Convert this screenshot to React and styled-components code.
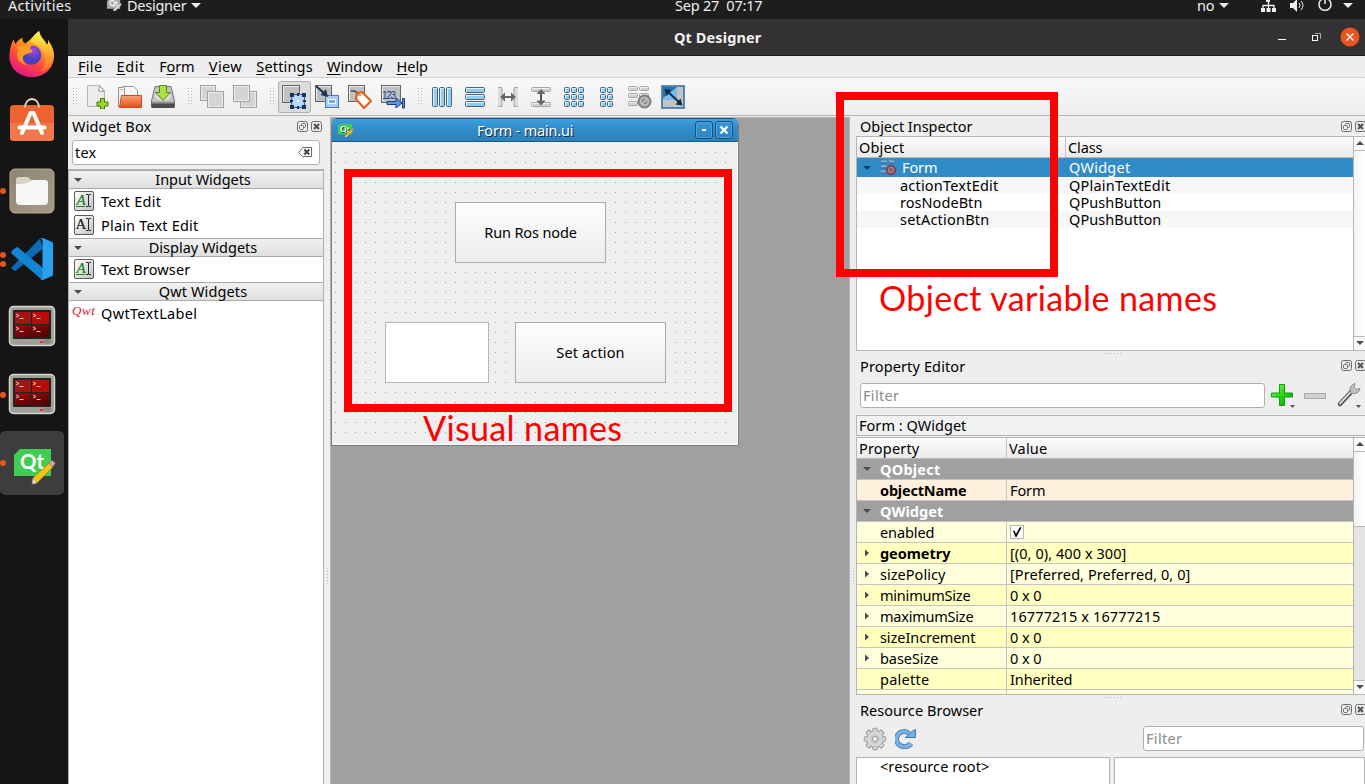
import React, { useLayoutEffect, useRef, useState } from "react";
import styled, { createGlobalStyle, css } from "styled-components";

const Global = createGlobalStyle`
  * { box-sizing: border-box; }
  body { margin: 0; overflow: hidden; }
  body { font-family: "Noto Sans", "Open Sans", sans-serif; font-size: 14.5px; line-height: 17px; color: #000; }
  svg { display: block; flex: none; }
`;

/* Text that is tracked to occupy a given width. */
const Line = styled.span`
  display: inline-block;
  flex: none;
  width: max-content;
  white-space: pre;
`;

function Fit({ w, children, className }) {
  const ref = useRef(null);
  const [spacing, setSpacing] = useState(0);
  useLayoutEffect(() => {
    const el = ref.current;
    el.style.letterSpacing = "0px";
    const natural = el.getBoundingClientRect().width;
    const next = (w + 0.4 - natural) / el.textContent.length;
    setSpacing(next);
    el.style.letterSpacing = next + "px";
  }, [w]);
  return (
    <Line ref={ref} className={className} style={{ letterSpacing: spacing }}>
      {children}
    </Line>
  );
}

/* ---------- shell ---------- */
const Screen = styled.div`
  position: relative;
  width: 1365px;
  height: 784px;
  overflow: hidden;
  display: flex;
  flex-direction: column;
  background: #eee;
`;
const TopBar = styled.header`
  display: grid;
  grid-template-columns: 8px 99px 568px 522px 1fr;
  height: 19px;
  flex: none;
  background: #1d1d1d;
  color: #f0f0f0;
  line-height: 10px;
`;
const TopCell = styled.div`
  display: flex;
  align-items: center;
  height: 10px;
  gap: ${(p) => p.$gap || 0}px;
`;
const TrayIcons = styled.div`
  display: flex;
  align-items: center;
  margin: 2px 0 0 26px;
  height: 12px;
`;
const Below = styled.div`
  display: flex;
  flex: 1;
  min-height: 0;
`;
const Dock = styled.nav`
  width: 68px;
  flex: none;
  background: #151515;
  padding-top: 2px;
`;
const DockItem = styled.div`
  position: relative;
  width: 64px;
  height: 68px;
  display: flex;
  align-items: center;
  justify-content: center;
  padding: ${(p) => p.$pad || "0"};
  border: solid transparent;
  border-width: 2px 0;
  border-radius: 6px;
  background: ${(p) => (p.$active ? "#3d3d3d" : "transparent")} padding-box;
`;
const Running = styled.div`
  position: absolute;
  left: 0;
  top: 0;
  height: 100%;
  display: flex;
  flex-direction: column;
  justify-content: center;
  gap: 3px;
  i {
    width: 6px;
    height: 6px;
    border-radius: 50%;
    background: #e95420;
  }
`;
const AppWindow = styled.main`
  flex: 1;
  min-width: 0;
  display: flex;
  flex-direction: column;
`;
const TitleBar = styled.div`
  display: grid;
  grid-template-columns: 606px 1fr 96px;
  align-items: center;
  height: 37px;
  flex: none;
  background: #333132;
  border-bottom: 1px solid #1c1c1c;
  color: #f4f4f4;
  font-weight: 700;
`;
const MenuBar = styled.div`
  display: flex;
  align-items: center;
  gap: 14.2px;
  height: 22px;
  flex: none;
  padding-left: 10px;
  border-bottom: 1px solid #cfcfcf;
  background: #eee;
  u { text-underline-offset: 2px; text-decoration-thickness: 1px; }
`;
const ToolBar = styled.div`
  display: flex;
  height: 38px;
  flex: none;
  padding-top: 3px;
  background: linear-gradient(#f9f9f9, #ededed);
  border-bottom: 1px solid #b5b5b5;
`;
const Handle = styled.div`
  width: ${(p) => p.$w || 16}px;
  padding: 7px 0 0 ${(p) => (p.$w ? 5 : 8)}px;
  &::before {
    content: "";
    display: block;
    width: 4px;
    height: 17px;
    background: radial-gradient(circle at 0.5px 0.5px, #b8b8b8 0.7px, transparent 0.8px) 0 0 / 3px 3px;
  }
`;
const ToolButton = styled.div`
  width: 33px;
  height: 32px;
  display: flex;
  align-items: center;
  justify-content: center;
  padding-right: 1px;
  border-radius: 3px;
  ${(p) =>
    p.$on &&
    css`
      background: #dcdcdc;
      box-shadow: inset 0 0 0 1px #b0b0b0;
    `}
`;
const Workspace = styled.div`
  display: flex;
  flex: 1;
  min-height: 0;
`;

/* ---------- shared dock parts ---------- */
const PanelTitle = styled.div`
  display: flex;
  align-items: center;
  justify-content: space-between;
  height: ${(p) => p.$h}px;
  flex: none;
  padding-left: 4px;
  margin-right: ${(p) => p.$r}px;
`;
const PanelButtons = styled.div`
  display: flex;
  gap: 2px;
`;
const Field = styled.div`
  display: flex;
  align-items: center;
  justify-content: space-between;
  width: ${(p) => p.$w}px;
  height: 25px;
  flex: none;
  padding: 0 6px 0 2px;
  border: 1px solid #b0b0b0;
  border-radius: 3px;
  background: #fff;
  color: ${(p) => (p.$hint ? "#8c8c8c" : "#000")};
`;
const Grip = styled.div`
  height: ${(p) => p.$h}px;
  flex: none;
  display: flex;
  justify-content: center;
  padding: 2px 0 0 5px;
  &::before {
    content: "";
    width: 17px;
    height: 1px;
    background: repeating-linear-gradient(90deg, #b9b9b9 0 1px, transparent 1px 3px);
  }
`;
const VGrip = styled.div`
  width: ${(p) => p.$w}px;
  flex: none;
  display: flex;
  align-items: flex-start;
  padding: 452px 0 0 ${(p) => p.$l}px;
  &::before {
    content: "";
    width: 1px;
    height: 17px;
    background: repeating-linear-gradient(#b9b9b9 0 1px, transparent 1px 3px);
  }
`;

/* ---------- widget box ---------- */
const WidgetBox = styled.section`
  width: 256px;
  flex: none;
  display: flex;
  flex-direction: column;
  padding-top: 1px;
`;
const SearchRow = styled.div`
  padding: 4px;
`;
const WidgetTree = styled.div`
  flex: 1;
  background: #fff;
  border: 1px solid #b0b0b0;
  border-bottom: 0;
`;
const Category = styled.div`
  display: grid;
  grid-template-columns: 17px 1fr 3px;
  align-items: center;
  justify-items: center;
  height: 19px;
  line-height: 17px;
  border: solid #a9a9a9;
  border-width: 1px 0;
  background: linear-gradient(#f1f1f1, #dfdfdf);
`;
const WidgetList = styled.div`
  padding-bottom: 1px;
`;
const WidgetRow = styled.div`
  display: grid;
  grid-template-columns: 32px 1fr;
  align-items: center;
  height: 24px;
  svg { margin-left: 5px; }
`;
const QwtMark = styled.i`
  padding-left: 3px;
  font: italic 13px/12px "Liberation Serif", serif;
  color: #e8101c;
  letter-spacing: 0.6px;
  margin-top: -4px;
`;

/* ---------- canvas ---------- */
const Mdi = styled.section`
  position: relative;
  width: 520px;
  flex: none;
  margin-top: 1px;
  background: #a0a0a0;
  border: solid #b5b5b5;
  border-width: 1px 1px 0;
`;
const FormWindow = styled.div`
  width: 408px;
  height: 328px;
  display: flex;
  flex-direction: column;
  border: 1px solid #7d7d7d;
  border-top: 0;
  border-radius: 6px 6px 0 0;
  background: #efefef;
  overflow: hidden;
`;
const FormTitle = styled.div`
  display: grid;
  grid-template-columns: 145px 1fr 20px 18px;
  align-items: center;
  height: 24px;
  flex: none;
  padding: 0 5px 0 0;
  color: #fff;
  background: linear-gradient(#3da2e2, #318dca 45%, #2c80b8);
  box-shadow: inset 0 1px #1c5a85, inset 0 -1px #1c5a85;
  text-shadow: 1px 1px 0 #123;
`;
const CaptionIcon = styled.div`
  padding: 1px 0 0 6px;
`;
const CaptionButton = styled.div`
  width: 18px;
  height: 18px;
  display: flex;
  align-items: center;
  justify-content: center;
  border: 1px solid #17517a;
  border-radius: 3px;
  box-shadow: inset 0 0 0 1px #4aa3dc;
`;
const FormBody = styled.div`
  position: relative;
  flex: 1;
  box-shadow: inset -1px -1px #fafafa;
  &::before {
    content: "";
    position: absolute;
    left: 3px;
    top: 10px;
    width: 391px;
    height: 281px;
    background:
      linear-gradient(90deg, transparent 1px, #efefef 1px) 0 0 / 10px 10px,
      linear-gradient(#9a9a9a 1px, transparent 1px) 0 0 / 10px 10px;
  }
`;
const placed = css`
  position: absolute;
  left: ${(p) => p.$x}px;
  top: ${(p) => p.$y}px;
  width: ${(p) => p.$w}px;
  height: ${(p) => p.$h}px;
`;
const PushButton = styled.div`
  ${placed}
  display: flex;
  align-items: center;
  justify-content: center;
  border: 1px solid #ababab;
  border-radius: 2px;
  background: linear-gradient(#fdfdfd, #ededed);
`;
const PlainEdit = styled.div`
  ${placed}
  border: 1px solid #b5b5b5;
  background: #fff;
`;

/* ---------- right docks ---------- */
const RightDocks = styled.section`
  flex: 1;
  min-width: 0;
  display: flex;
  flex-direction: column;
  padding-top: 1px;
`;
const Frame = styled.div`
  display: flex;
  height: ${(p) => p.$h}px;
  flex: none;
  border: 1px solid #b5b5b5;
  border-right: 0;
  background: #fff;
`;
const Table = styled.div`
  width: 496px;
  flex: none;
  overflow: hidden;
`;
const HeaderRow = styled.div`
  display: grid;
  grid-template-columns: ${(p) => p.$first}px 1fr;
  align-items: center;
  height: 21px;
  line-height: 20px;
  padding-left: 2px;
  background: linear-gradient(#fcfcfc, #ebebeb);
  border-bottom: 1px solid #b9b9b9;
  > * + * { border-left: 1px solid #c4c4c4; padding-left: 2px; }
`;
const ObjectRow = styled.div`
  display: grid;
  grid-template-columns: 6px 17px 22px 167px 1fr;
  align-items: center;
  height: 19px;
  background: #308cc6;
  color: #fff;
`;
const ObjectCells = styled.div`
  display: grid;
  grid-template-columns: 43px 169px 1fr;
  align-items: center;
  height: 17px;
  background: ${(p) => (p.$alt ? "#f7f7f7" : "#fff")};
`;
const ScrollBar = styled.div`
  flex: 1;
  display: flex;
  flex-direction: column;
  border-left: 1px solid #b5b5b5;
  background: ${(p) => (p.$groove ? "#e4e4e4" : "linear-gradient(90deg, #f4f4f4, #fff)")};
`;
const ScrollEnd = styled.div`
  height: 14px;
  flex: none;
  padding: 4px 0 0 2px;
  background: #fbfbfb;
  border: solid #b9b9b9;
  border-width: ${(p) => (p.$bottom ? "1px 0 0" : "0 0 1px")};
`;
const Thumb = styled.div`
  flex: ${(p) => (p.$h ? `0 0 ${p.$h}px` : 1)};
  background: linear-gradient(90deg, #f4f4f4, #fff);
  border-bottom: ${(p) => (p.$h ? "1px solid #b9b9b9" : 0)};
`;
const Space = styled.div`
  flex: 1;
`;
const EditorBar = styled.div`
  display: flex;
  align-items: center;
  height: 39px;
  flex: none;
  padding-left: 4px;
  gap: 6px;
`;
const IconSlots = styled.div`
  display: flex;
  align-items: center;
  gap: ${(p) => p.$gap}px;
`;
const ObjectName = styled.div`
  height: 21px;
  flex: none;
  margin-bottom: 1px;
  padding-left: 2px;
  line-height: 19px;
  border: 1px solid #b5b5b5;
  border-right: 0;
  background: #f1f1f1;
`;
const tones = { group: "#a0a0a0", peach: "#fff0de", pale: "#ffffdc", deep: "#ffffbf" };
const PropertyRow = styled.div`
  display: grid;
  grid-template-columns: 23px 126px 1fr;
  align-items: center;
  height: 21px;
  line-height: 20px;
  border-bottom: 1px solid #c3c3c3;
  background: ${(p) => tones[p.$tone]};
  color: ${(p) => (p.$tone === "group" ? "#fff" : "#000")};
  font-weight: ${(p) => (p.$bold ? 700 : 400)};
  svg { margin-left: 6px; }
`;
const ValueCell = styled.div`
  display: flex;
  align-items: center;
  height: 20px;
  padding-left: 3px;
  border-left: 1px solid #c3c3c3;
  font-weight: 400;
`;
const Check = styled.div`
  width: 14px;
  height: 14px;
  border: 1px solid #b5b5b5;
  background: #fff;
  svg { margin: 0; }
`;
const ResourceBar = styled.div`
  display: flex;
  align-items: center;
  justify-content: space-between;
  height: 37px;
  flex: none;
  padding: 0 1px 0 7px;
`;
const ResourcePanes = styled.div`
  display: grid;
  grid-template-columns: 254px 1fr;
  gap: 4px;
  flex: 1;
`;
const Pane = styled.div`
  border: 1px solid #b5b5b5;
  border-bottom: 0;
  background: #fff;
  padding-left: 23px;
  line-height: 17px;
`;

/* ---------- annotations ---------- */
const Outline = styled.div`
  ${placed}
  border: 8px solid #f00;
`;
const Caption = styled.div`
  position: absolute;
  left: ${(p) => p.$x}px;
  top: ${(p) => p.$y}px;
  font: 34px/40px Lato, sans-serif;
  color: #f00;
`;

/* ---------- icons ---------- */
const Down = ({ c = "#4a4a4a", w = 8, h = 4 }) => (
  <svg width={w} height={h} viewBox="0 0 8 4" preserveAspectRatio="none"><path d="M0 0h8L4 4z" fill={c} /></svg>
);
const Up = () => <svg width="8" height="4" viewBox="0 0 8 4"><path d="M0 4h8L4 0z" fill="#4a4a4a" /></svg>;
const Right = () => <svg width="8" height="8" viewBox="0 0 8 8"><path d="M2 0.5v7L6 4z" fill="#4a4a4a" /></svg>;

const FloatClose = () => (
  <PanelButtons>
    <svg width="12" height="12" viewBox="0 0 12 12" fill="none" stroke="#6a6a6a">
      <rect x=".5" y=".5" width="10" height="10" rx="2" />
      <rect x="4.5" y="2.5" width="4" height="4" rx="1" />
      <rect x="2.5" y="4.5" width="4" height="4" rx="1" fill="#eee" />
    </svg>
    <svg width="12" height="12" viewBox="0 0 12 12" fill="none" stroke="#6a6a6a">
      <rect x=".5" y=".5" width="10" height="10" rx="2" />
      <path d="M3 3l5 5M8 3l-5 5" stroke="#555" strokeWidth="2.2" />
    </svg>
  </PanelButtons>
);
const ClearIcon = () => (
  <svg width="15" height="11" viewBox="0 0 15 11" fill="none" stroke="#666">
    <path d="M.7 5.5L4.500.5H13.500V9.500H4.500Z" />
    <path d="M6.300 2.500l5 5M11.300 2.500l-5 5" strokeWidth="2" stroke="#444" />
  </svg>
);
const TextGlyph = ({ green }) => (
  <svg width="20" height="20" viewBox="0 0 20 20">
    <defs><linearGradient id="tg" x2="1" y2="1"><stop stopColor="#fff" /><stop offset="1" stopColor="#c2c2c2" /></linearGradient></defs>
    <rect x=".5" y=".5" width="19" height="19" rx="1.500" fill="url(#tg)" stroke="#5a5a5a" />
    <text x={green ? 2.5 : 1.5} y="14" fontFamily="Liberation Serif, serif" fontSize="15" fontStyle={green ? "italic" : "normal"} fill={green ? "#1b7d1b" : "#222"} stroke={green ? "#1b7d1b" : "#222"} strokeWidth=".2">A</text>
    {green && <path d="M2 15.500h9" stroke="#1b7d1b" />}
    <path d="M12 3.500h2l.5.5.5-.5h2M12 15.500h2l.5-.5.5.5h2M14.500 4v11" fill="none" stroke="#222" />
  </svg>
);
const Firefox = () => (
  <svg width="46" height="48" viewBox="0 0 46 48">
    <defs>
      <linearGradient id="ffa" x1=".8" y1="0" x2=".3" y2="1"><stop stopColor="#fff44f" /><stop offset=".35" stopColor="#ffa01e" /><stop offset=".65" stopColor="#ff4a3a" /><stop offset="1" stopColor="#e8128a" /></linearGradient>
      <radialGradient id="ffb" cx=".6" cy=".25"><stop stopColor="#a04be8" /><stop offset="1" stopColor="#4a3fc0" /></radialGradient>
      <linearGradient id="ffc" x2="0" y2="1"><stop stopColor="#fff44f" /><stop offset=".5" stopColor="#ffb52e" /><stop offset="1" stopColor="#ff6a35" /></linearGradient>
    </defs>
    <path d="M5 9c0 2 .5 4 1.500 5 1-1.500 4-5.500 7-6-.5 3 1 5 3 5.500C22 9 26 5 30 1c1 6 6 9 8 14 1-1 1.500-3 1-5 4 6 6.500 11 6 17-.5 12-10 20-22 20S0 39 .5 26C.8 18 2 14 5 9z" fill="url(#ffa)" />
    <path d="M22 12C22 8 26 4 30 1c1 6 6 9 8 14 1-1 1.500-3 1-5 6 9 7 15 3 24-2 4-6 7-10 7 5-5 6-14 2-20-3-5-7-7-12-9z" fill="url(#ffc)" />
    <circle cx="22.500" cy="25" r="9.800" fill="url(#ffb)" />
    <path d="M7 17c4-2 7-1 10-1 2-1 5-2 7-1-2 1-3 2-3 4 1 1 3 1 2 3-3 2-7 1-9 5-1 5 3 7 4 8-6-1-10-5-10-10 0-3 1-4 2-5-1-1-2-2-3-3z" fill="#ff9a22" />
  </svg>
);
const Software = () => (
  <svg width="46" height="44" viewBox="0 0 46 44">
    <path d="M16 10C16-2 30-2 30 10" fill="none" stroke="#f3d9bd" strokeWidth="1.800" />
    <rect x="1" y="7" width="44" height="36" rx="4" fill="#ee6430" />
    <path d="M1 25h44v14a4 4 0 0 1-4 4H5a4 4 0 0 1-4-4z" fill="#f0784a" />
    <path d="M16 9.500q0-1 .4-2.500M30 9.500q0-1-.4-2.500" stroke="#f3d9bd" strokeWidth="1.800" />
    <path d="M13 35L21.500 15h3L33 35M10.500 29.500h25" stroke="#fff" strokeWidth="4" fill="none" strokeLinecap="round" strokeLinejoin="round" />
  </svg>
);
const Files = () => (
  <svg width="46" height="46" viewBox="0 0 46 46">
    <defs><linearGradient id="fl" x2="1" y2="1"><stop stopColor="#8e8471" /><stop offset="1" stopColor="#a69c8c" /></linearGradient></defs>
    <rect x="1" y="1" width="44" height="44" rx="5" fill="url(#fl)" stroke="#b3a998" />
    <path d="M7 12q0-3 3-3h8q2 0 3 2l1 1v8H7z" fill="#d8d3c7" />
    <path d="M7 16q8 0 12-1l4-3h13q3 0 3 3v18q0 4-4 4H11q-4 0-4-4z" fill="#f8f7f5" />
  </svg>
);
const Code = () => (
  <svg width="44" height="44" viewBox="0 0 44 44">
    <path d="M2 32q-1-1 0-2L30 1.500l3 10L6 33.500q-2 1-4-1.500z" fill="#0a6ab5" />
    <path d="M2 13.500L6 10.500q1-1 2 0L33 31v12q-1 0-2-1L2 17q-1.500-2 0-3.500z" fill="#1485d3" />
    <path d="M33 1l9 4q1 .5 1 2v30q0 1.500-1 2l-9 4q-1.500.5-3-1 2.500 1 2.500-1.500V3.500Q32.500 1 30 2q1.500-1.500 3-1z" fill="#27a2ef" />
  </svg>
);
const Terminator = () => (
  <svg width="48" height="42" viewBox="0 0 48 42">
    <defs><linearGradient id="tm" x2="1" y2="1"><stop stopColor="#9a0c0c" /><stop offset="1" stopColor="#4c0000" /></linearGradient></defs>
    <rect x="1.500" y="1.500" width="45" height="39" rx="4" fill="#9f9f98" stroke="#d5d5cf" strokeWidth="1.500" />
    <rect x="5" y="5" width="38" height="29" rx="1" fill="#222" />
    <path d="M7 7h16v12H7z" fill="#a31515" /><path d="M24 7h17v12H24z" fill="#bb0909" />
    <path d="M7 20h16v12H7zM24 20h17v12H24z" fill="url(#tm)" />
    {[[8, 9], [25, 9], [8, 22], [25, 22]].map(([x, y]) => (
      <path key={x + "-" + y} d={`M${x} ${y}l3 1.500-3 1.500M${x + 3.500} ${y + 4.500}h4`} fill="none" stroke="#ddd" strokeWidth=".9" />
    ))}
    <path d="M32 37h3" stroke="#f22" strokeWidth="2" /><path d="M36 35h6v3h-6z" fill="#8b8b84" stroke="#777" strokeWidth=".5" />
  </svg>
);
const QtPencil = ({ w = 42, gray }) => (
  <svg width={w} height={(w * 36) / 42} viewBox="0 0 42 36">
    <path d="M6 0H37V27H0V6z" fill={gray ? "#aaa" : "#41cd52"} />
    <text x="6" y="20" fontFamily="Lato, Noto Sans, sans-serif" fontWeight="700" fontSize="21" textLength="24" lengthAdjust="spacingAndGlyphs" fill="#fff">Qt</text>
    <path d="M19 29L35 14l4 4-16 16-5 1z" fill={gray ? "#ddd" : "#f6c21c"} stroke={gray ? "#777" : "#9b7415"} strokeWidth=".7" />
    <path d="M35 14l2-2q2-1 3 1 2 1 0 3l-2 2z" fill={gray ? "#ddd" : "#d9a0a0"} stroke="#888" strokeWidth=".6" />
    <path d="M18 35l1-6 4 5z" fill="#eee4cd" stroke="#777" strokeWidth=".5" />
  </svg>
);

const T = ({ children }) => <svg width="24" height="24" viewBox="0 0 24 24">{children}</svg>;
const grayBox = (x, y, s = 16) => (
  <g>
    <rect x={x + 0.5} y={y + 0.5} width={s} height={s} fill="#d4d4d4" stroke="#a0a0a0" />
    <rect x={x + 1.5} y={y + 1.5} width={s - 2} height={s - 2} fill="none" stroke="#ebebeb" />
  </g>
);
const darkBox = (x, y, w, h) => (
  <g>
    <rect x={x + 0.5} y={y + 0.5} width={w} height={h} fill="#c0c0c0" stroke="#666" />
    <path d={`M${x + 1.5} ${y + h - 0.5}V${y + 1.5}H${x + w}`} fill="none" stroke="#ececec" />
  </g>
);
const Cell = ({ x, y, w, h, gray }) => (
  <g>
    <rect x={x + 0.5} y={y + 0.5} width={w - 1} height={h - 1} rx="1" fill={gray ? "#cfcfcf" : "#91cdef"} stroke={gray ? "#a6a6a6" : "#4a6484"} />
    <path d={`M${x + 1.5} ${y + h - 1.5}V${y + 1.5}H${x + w - 1.5}`} fill="none" stroke={gray ? "#efefef" : "#dff3ff"} />
  </g>
);
const NewIcon = () => (
  <T>
    <path d="M2.500.5h12l5 5v16h-17z" fill="#ececec" stroke="#b5b5b5" /><path d="M14.500.5l-1 5.500 6 .5z" fill="#fff" stroke="#999" />
    <path d="M15.500 13.500h4v3.500h3.500v4h-3.500V24h-4v-3h-3.500v-4h3.500z" fill="#9bd42d" stroke="#3f7a0c" />
  </T>
);
const OpenIcon = () => (
  <T>
    <path d="M.5 22V2.500h4v-1h8l4 3V22z" fill="#f3f3f3" stroke="#8f8f8f" />
    <path d="M6.500 11V1.500h9l4 3.500V11z" fill="#f7f7f7" stroke="#999" /><path d="M2 4.500h3" stroke="#e8b05a" />
    <defs><linearGradient id="of" x2="0" y2="1"><stop stopColor="#f6a679" /><stop offset="1" stopColor="#e74d14" /></linearGradient></defs>
    <path d="M3.500 10.500h20v12H1.500z" fill="url(#of)" stroke="#cf4c1a" />
  </T>
);
const SaveIcon = () => (
  <T>
    <path d="M4 1.500h16L23.500 16v6.500H.5V16z" fill="#c4c4c4" stroke="#777" /><path d="M.5 18h23v3q0 2-2 2h-19q-2 0-2-2z" fill="#4b4b4b" />
    <path d="M1 16.500h22v2H1z" fill="#999" /><ellipse cx="12" cy="11" rx="8" ry="5" fill="#dedede" />
    <path d="M8.500.5h7v7h4L12 15.500 4.500 7.500h4z" fill="#aee03f" stroke="#4d8a12" />
  </T>
);
const EditWidgets = () => (
  <T>
    {darkBox(0, 0, 17, 17)}
    <rect x="9.500" y="9.500" width="13" height="13" fill="#a9cdf8" stroke="#3b63a0" /><path d="M11 11h10v10H11z" fill="#b9d8fb" />
    <path d="M8 8h4v4H8zM20 8h4v4h-4zM8 20h4v4H8zM20 20h4v4h-4zM15 8h2v3h-2zM15 21h2v3h-2zM8 15h3v2H8zM21 15h3v2h-3z" fill="#17345f" />
    <path d="M15 15h2v2h-2z" fill="#fff" />
  </T>
);
const EditSignals = () => (
  <T>
    {darkBox(0, 0, 16, 16)}
    <rect x="10.500" y="10.500" width="13" height="12" fill="#a9cdf5" stroke="#4c78b4" /><path d="M13.500 14.500h7v4h-7z" fill="#79a9e6" stroke="#fff" />
    <path d="M1 1l9 8" stroke="#1b3557" strokeWidth="2.200" /><path d="M13 12L5.500 10 11 4z" fill="#1b3557" />
  </T>
);
const EditBuddies = () => (
  <T>
    {darkBox(0, 0, 16, 16)}
    <path d="M3 6q5-1 8 4" fill="none" stroke="#333" strokeWidth="1.300" />
    <path d="M9 8.500l5-1.500 9 9-7 7-8-9z" fill="#fff" stroke="#e0621d" strokeWidth="2.200" /><path d="M10 10l3 0" stroke="#a33" />
  </T>
);
const EditTabs = () => (
  <T>
    {darkBox(0, 0, 19, 17)}
    <text x="1" y="14" fontFamily="Liberation Sans, sans-serif" fontSize="10" textLength="14" fill="#123e8c">123</text>
    <path d="M6 16.500h9v-3.500l6 5-6 5v-3.500H6z" fill="#5e97e0" stroke="#173f7d" /><path d="M21.500 13.500h2v9.500h-2z" fill="#5e97e0" stroke="#173f7d" />
  </T>
);
const HSplit = () => (
  <T>
    <path d="M2 2.500h4v19H2M22 2.500h-4v19h4" fill="#dcdcdc" stroke="#a6a6a6" />
    <path d="M7 12h10" stroke="#666" strokeWidth="2" /><path d="M4 12l5-4.500v9zM20 12l-5-4.500v9z" fill="#666" />
  </T>
);
const VSplit = () => (
  <T>
    <Cell gray x={2} y={2} w={20} h={5} /><Cell gray x={2} y={17} w={20} h={5} />
    <path d="M12 7v10" stroke="#555" strokeWidth="2" /><path d="M12 4l-4.500 5h9zM12 20.500l-4.500-5h9z" fill="#666" />
  </T>
);
const grid = (xs, ys, w, h, gray) => xs.map((x) => ys.map((y) => <Cell key={x + "-" + y} x={x} y={y} w={w} h={h} gray={gray} />));
const BreakLayout = () => (
  <T>
    {grid([0, 11], [1, 8, 16], 10, 5, true)}
    <circle cx="16.500" cy="16.500" r="6.500" fill="#8d8d8d" stroke="#777" />
    <circle cx="16.500" cy="16.500" r="3.800" fill="none" stroke="#c5c5c5" strokeWidth="1.500" /><path d="M14 19l5-5" stroke="#c5c5c5" strokeWidth="1.500" />
  </T>
);
const NoLayout = () => (
  <svg width="17" height="17" viewBox="0 0 17 17">
    <path d="M1 2.500h6M9 2.500h5M1 7.500h6M9 7.500h3M1 12.500h5" stroke="#8fb0cc" strokeWidth="2" /><path d="M1 4h6M9 4h5M1 9h6M1 14h5" stroke="#4a6580" />
    <circle cx="11" cy="11" r="4.800" fill="#8b4a5c" stroke="#5d4a62" /><circle cx="11" cy="11" r="2.600" fill="none" stroke="#bd8490" /><path d="M9 13l4-4" stroke="#bd8490" />
  </svg>
);
const AdjustSize = () => (
  <T>
    <rect x="1" y="1" width="22" height="22" fill="#c2c5c8" stroke="#2e6a9c" strokeWidth="1.500" /><path d="M2 2h14v13H2z" fill="#7dbbe6" />
    <path d="M2 2h14L2 13z" fill="#2773b0" /><path d="M6 6l13 12" stroke="#0d2d48" strokeWidth="2" /><path d="M3.500 4l7 1-5 6zM21.500 20.500l-7-1 5-6z" fill="#0d2d48" />
  </T>
);
const Plus = () => (
  <svg width="24" height="26" viewBox="0 0 24 26">
    <defs><linearGradient id="pl" x2="1" y2="1"><stop stopColor="#8dfa6d" /><stop offset=".5" stopColor="#1fd80f" /><stop offset="1" stopColor="#02a802" /></linearGradient></defs>
    <path d="M8.500 1.500h5v8.500h8v4h-8v8.500h-5v-8.500h-8v-4h8z" fill="url(#pl)" stroke="#159a12" />
    <path d="M19 22h5l-2.500 3z" fill="#555" />
  </svg>
);
const Minus = () => <svg width="22" height="8" viewBox="0 0 22 8"><rect x=".5" y="1.500" width="21" height="5" fill="#d2d2d2" stroke="#a9a9a9" /></svg>;
const Wrench = () => (
  <svg width="28" height="26" viewBox="-2 0 28 26">
    <path d="M3 21L15 8" stroke="#4b4b4b" strokeWidth="4.500" strokeLinecap="round" /><path d="M3 20.500L15 7.500" stroke="#d5d5d5" strokeWidth="2.200" strokeLinecap="round" />
    <path d="M13 7q0-5 5-6.500l-1 4 2 2 4-1q-1 5-6 5l-3 0z" fill="#c2c2c2" stroke="#8c8c8c" /><path d="M19 22h5l-2.500 3z" fill="#555" />
  </svg>
);
const Gear = () => (
  <svg width="24" height="24" viewBox="-12 -12 24 24">
    {[0, 45, 90, 135, 180, 225, 270, 315].map((a) => <rect key={a} x="-2.500" y="-10.800" width="5" height="5" rx="1.500" fill="#d8d8d8" stroke="#979797" transform={`rotate(${a})`} />)}
    <circle r="8" fill="#d8d8d8" stroke="#a9a9a9" strokeWidth=".6" /><circle r="5" fill="#cacaca" /><circle r="2.700" fill="#f0f0f0" stroke="#999" />
  </svg>
);
const Reload = () => (
  <svg width="22" height="22" viewBox="0 0 22 22">
    <path d="M16 15.500q-2 3-6 3a7.500 7.500 0 1 1 4-13" fill="none" stroke="#3f77ae" strokeWidth="5" />
    <path d="M16 15.500q-2 3-6 3a7.500 7.500 0 1 1 4-13" fill="none" stroke="#79b0e2" strokeWidth="3.400" />
    <path d="M10.500 9.500h10V1.500l-3 1.500z" fill="#79b0e2" stroke="#3f77ae" />
  </svg>
);

/* ---------- data ---------- */
const menus = [["", "F", "ile", 24], ["", "E", "dit", 28], ["F", "o", "rm", 35], ["", "V", "iew", 33], ["", "S", "ettings", 56], ["", "W", "indow", 55], ["", "H", "elp", 31]];
const objects = [["actionTextEdit", 98, "QPlainTextEdit", 101], ["rosNodeBtn", 82, "QPushButton", 92], ["setActionBtn", 89, "QPushButton", 92]];
const properties = [
  { n: "QObject", w: 60, tone: "group", bold: true, mark: "down" },
  { n: "objectName", w: 86, tone: "peach", bold: true, v: "Form", vw: 35 },
  { n: "QWidget", w: 63, tone: "group", bold: true, mark: "down" },
  { n: "enabled", w: 54, tone: "pale", check: true },
  { n: "geometry", w: 70, tone: "deep", bold: true, mark: "right", v: "[(0, 0), 400 x 300]", vw: 116 },
  { n: "sizePolicy", w: 65, tone: "pale", mark: "right", v: "[Preferred, Preferred, 0, 0]", vw: 180 },
  { n: "minimumSize", w: 90, tone: "deep", mark: "right", v: "0 x 0", vw: 31 },
  { n: "maximumSize", w: 93, tone: "pale", mark: "right", v: "16777215 x 16777215", vw: 150 },
  { n: "sizeIncrement", w: 95, tone: "deep", mark: "right", v: "0 x 0", vw: 31 },
  { n: "baseSize", w: 58, tone: "pale", mark: "right", v: "0 x 0", vw: 31 },
  { n: "palette", w: 49, tone: "deep", v: "Inherited", vw: 62 },
];
const dockApps = [
  { icon: <Firefox />, dots: 0, pad: "0 0 2px" },
  { icon: <Software />, dots: 0, pad: "0 0 6px" },
  { icon: <Files />, dots: 1 },
  { icon: <Code />, dots: 2 },
  { icon: <Terminator />, dots: 0, pad: "0 0 2px" },
  { icon: <Terminator />, dots: 1, pad: "0 0 2px" },
  { icon: <QtPencil />, dots: 1, active: true, pad: "8px 0 0 5px" },
];
const tools = [
  [<NewIcon />, <OpenIcon />, <SaveIcon />],
  [<T>{grayBox(0, 0, 15)}{grayBox(7, 6, 16)}</T>, <T>{grayBox(7, 6, 16)}{grayBox(0, 0, 16)}</T>],
  [<EditWidgets />, <EditSignals />, <EditBuddies />, <EditTabs />],
  [
    <T>{grid([2, 9, 16], [2], 6, 20)}</T>,
    <T>{grid([2], [2, 9, 16], 20, 6)}</T>,
    <HSplit />, <VSplit />,
    <T>{grid([2, 9, 16], [2, 9, 16], 6, 6)}</T>,
    <T>{grid([5, 12], [2, 9, 16], 6, 6)}</T>,
    <BreakLayout />, <AdjustSize />,
  ],
];

export default function App() {
  return (
    <Screen>
      <Global />
      <TopBar>
        <span />
        <TopCell><Fit w={63}>Activities</Fit></TopCell>
        <TopCell $gap={5}><QtPencil w={15} gray /><Fit w={59}>Designer</Fit><Down c="#eee" w={10} h={5} /></TopCell>
        <TopCell><Fit w={87}>Sep 27  07:17</Fit></TopCell>
        <TopCell $gap={5}>
          <Fit w={17}>no</Fit><Down c="#eee" w={10} h={5} />
          <TrayIcons>
            <svg width="102" height="12" viewBox="0 0 102 12" fill="none" stroke="#eee">
              <path d="M6-1h4v3H6zM1 8h4v4H1zM12 8h4v4h-4zM6.500 8h4v4h-4z" fill="#eee" stroke="none" /><path d="M8.500 2v7M3 9V5.500h11V9" strokeWidth="1.300" />
              <path d="M30 3h3l4-4v13l-4-4h-3z" fill="#eee" stroke="none" /><path d="M39 3q2 2 0 5M41 1q4 4 0 9" />
              <path d="M61.500 -.5a6 6 0 1 0 7 0M65-2v6" strokeWidth="1.500" /><path d="M83 3h10l-5 5z" fill="#eee" stroke="none" />
            </svg>
          </TrayIcons>
        </TopCell>
      </TopBar>
      <Below>
        <Dock>
          {dockApps.map(({ icon, dots, active, pad }, i) => (
            <DockItem key={i} $active={active} $pad={pad}>
              {icon}
              {dots > 0 && <Running>{Array.from({ length: dots }, (_, d) => <i key={d} />)}</Running>}
            </DockItem>
          ))}
        </Dock>
        <AppWindow>
          <TitleBar>
            <span />
            <Fit w={87}>Qt Designer</Fit>
            <svg width="96" height="36" viewBox="0 0 96 36" fill="none" stroke="#fff">
              <path d="M9 20.500h8" /><rect x="43.500" y="16.500" width="5" height="5" /><path d="M46 14.500h5.500V20" stroke="#aaa" />
              <circle cx="81" cy="18" r="9.500" fill="#e95420" stroke="none" /><path d="M77.500 14.500l7 7M84.500 14.500l-7 7" strokeWidth="1.400" />
            </svg>
          </TitleBar>
          <MenuBar>
            {menus.map(([a, u, b, w]) => <Fit key={u + b} w={w}>{a}<u>{u}</u>{b}</Fit>)}
          </MenuBar>
          <ToolBar>
            {tools.map((group, g) => (
              <React.Fragment key={g}>
                <Handle $w={g === 0 ? 13 : 0} />
                {group.map((icon, i) => <ToolButton key={i} $on={g === 2 && i === 0}>{icon}</ToolButton>)}
              </React.Fragment>
            ))}
          </ToolBar>
          <Workspace>
            <WidgetBox>
              <PanelTitle $h={19} $r={1}><Fit w={79}>Widget Box</Fit><FloatClose /></PanelTitle>
              <SearchRow><Field $w={248}><Fit w={21}>tex</Fit><ClearIcon /></Field></SearchRow>
              <WidgetTree>
                <Category><Down /><Fit w={95}>Input Widgets</Fit></Category>
                <WidgetList>
                  <WidgetRow><TextGlyph green /><Fit w={60}>Text Edit</Fit></WidgetRow>
                  <WidgetRow><TextGlyph /><Fit w={97}>Plain Text Edit</Fit></WidgetRow>
                </WidgetList>
                <Category><Down /><Fit w={108}>Display Widgets</Fit></Category>
                <WidgetList><WidgetRow><TextGlyph green /><Fit w={89}>Text Browser</Fit></WidgetRow></WidgetList>
                <Category><Down /><Fit w={88}>Qwt Widgets</Fit></Category>
                <WidgetList><WidgetRow><QwtMark>Qwt</QwtMark><Fit w={96}>QwtTextLabel</Fit></WidgetRow></WidgetList>
              </WidgetTree>
            </WidgetBox>
            <VGrip $w={6} $l={3} />
            <Mdi>
              <FormWindow>
                <FormTitle>
                  <CaptionIcon><QtPencil w={16} /></CaptionIcon>
                  <Fit w={96}>Form - main.ui</Fit>
                  <CaptionButton><svg width="4" height="2"><path d="M0 0h4v2H0z" fill="#fff" /></svg></CaptionButton>
                  <CaptionButton><svg width="10" height="10" viewBox="0 0 10 10"><path d="M1.500 1.500l7 7M8.500 1.500l-7 7" stroke="#fff" strokeWidth="2.400" /></svg></CaptionButton>
                </FormTitle>
                <FormBody>
                  <PushButton $x={123} $y={60} $w={151} $h={61}><Fit w={92}>Run Ros node</Fit></PushButton>
                  <PlainEdit $x={53} $y={180} $w={104} $h={61} />
                  <PushButton $x={183} $y={180} $w={151} $h={61}><Fit w={68}>Set action</Fit></PushButton>
                </FormBody>
              </FormWindow>
            </Mdi>
            <VGrip $w={6} $l={3} />
            <RightDocks>
              <PanelTitle $h={19} $r={-2}><Fit w={112}>Object Inspector</Fit><FloatClose /></PanelTitle>
              <Frame $h={215}>
                <Table>
                  <HeaderRow $first={206}><Fit w={45}>Object</Fit><div><Fit w={34}>Class</Fit></div></HeaderRow>
                  <ObjectRow><span /><Down c="#173f5c" /><NoLayout /><Fit w={35}>Form</Fit><Fit w={61}>QWidget</Fit></ObjectRow>
                  {objects.map(([n, nw, c, cw], i) => (
                    <ObjectCells key={n} $alt={i % 2 === 0}><span /><Fit w={nw}>{n}</Fit><Fit w={cw}>{c}</Fit></ObjectCells>
                  ))}
                </Table>
                <ScrollBar><ScrollEnd><Up /></ScrollEnd><Thumb /><ScrollEnd $bottom><Down /></ScrollEnd></ScrollBar>
              </Frame>
              <Grip $h={5} />
              <PanelTitle $h={20} $r={-2}><Fit w={105}>Property Editor</Fit><FloatClose /></PanelTitle>
              <EditorBar>
                <Field $w={405} $hint><Fit w={36}>Filter</Fit></Field>
                <IconSlots $gap={9}><Plus /><Minus /><Wrench /></IconSlots>
              </EditorBar>
              <ObjectName><Fit w={107}>Form : QWidget</Fit></ObjectName>
              <Frame $h={258}>
                <Table>
                  <HeaderRow $first={147}><Fit w={60}>Property</Fit><div><Fit w={38}>Value</Fit></div></HeaderRow>
                  {properties.map((p) => (
                    <PropertyRow key={p.n} $tone={p.tone} $bold={p.bold}>
                      {p.mark === "down" ? <Down /> : p.mark === "right" ? <Right /> : <span />}
                      <Fit w={p.w}>{p.n}</Fit>
                      {p.tone !== "group" && (
                        <ValueCell>
                          {p.check ? (
                            <Check><svg width="12" height="12" viewBox="0 0 12 12"><path d="M2 5l1.500-.5L5 8l4-7 1.500.5L5.500 11H4.500z" fill="#000" /></svg></Check>
                          ) : <Fit w={p.vw}>{p.v}</Fit>}
                        </ValueCell>
                      )}
                    </PropertyRow>
                  ))}
                  <PropertyRow $tone="pale"><span /><span /><ValueCell /></PropertyRow>
                </Table>
                <ScrollBar $groove><ScrollEnd><Up /></ScrollEnd><Thumb $h={75} /><Space /><ScrollEnd $bottom><Down /></ScrollEnd></ScrollBar>
              </Frame>
              <Grip $h={5} />
              <PanelTitle $h={20} $r={-2}><Fit w={123}>Resource Browser</Fit><FloatClose /></PanelTitle>
              <ResourceBar>
                <IconSlots $gap={8}><Gear /><Reload /></IconSlots>
                <Field $w={221} $hint><Fit w={36}>Filter</Fit></Field>
              </ResourceBar>
              <ResourcePanes><Pane><Fit w={109}>&lt;resource root&gt;</Fit></Pane><Pane /></ResourcePanes>
            </RightDocks>
          </Workspace>
        </AppWindow>
      </Below>
      <Outline $x={344} $y={169} $w={388} $h={243} />
      <Outline $x={836} $y={92} $w={222} $h={185} />
      <Caption $x={423} $y={408}><Fit w={199}>Visual names</Fit></Caption>
      <Caption $x={879} $y={278}><Fit w={338}>Object variable names</Fit></Caption>
    </Screen>
  );
}
